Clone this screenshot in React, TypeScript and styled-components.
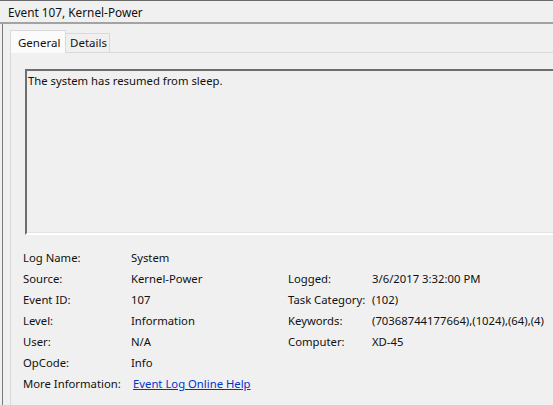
import { Fragment } from "react";
import styled, { createGlobalStyle } from "styled-components";

const GlobalStyle = createGlobalStyle`
  html, body {
    margin: 0;
    padding: 0;
    background: #f0f0f0;
  }
  body {
    font-family: "Noto Sans", "Open Sans", sans-serif;
    font-size: 11.3px;
    color: #111;
  }
`;

const Window = styled.div`
  width: 553px;
  height: 405px;
  overflow: hidden;
  background: #f0f0f0;
  display: flex;
  flex-direction: column;
`;

const TitleBar = styled.div`
  height: 21px;
  flex: none;
  border-top: 1px solid #6b6b6b;
  border-bottom: 2px solid #a3a3a3;
  padding-left: 8px;
  display: flex;
  align-items: center;
  font-size: 11.8px;
`;

const Body = styled.div`
  flex: 1;
  margin-left: 2px;
  border-left: 1px solid #7a7a7a;
  padding: 6px 0 0 7px;
  display: flex;
  flex-direction: column;
`;

const TabStrip = styled.div`
  display: flex;
  align-items: flex-end;
  height: 23px;
  position: relative;
  z-index: 1;
  margin-bottom: -1px;
`;

const Tab = styled.div<{ $active?: boolean; $width: number }>`
  box-sizing: border-box;
  width: ${(p) => p.$width}px;
  height: ${(p) => (p.$active ? "23px" : "20px")};
  padding: ${(p) => (p.$active ? "0 0 0 7px" : "0 0 1px 4px")};
  margin-left: ${(p) => (p.$active ? "0" : "-1px")};
  border: 1px solid #d9d9d9;
  border-bottom: ${(p) => (p.$active ? "none" : "1px solid #d9d9d9")};
  background: ${(p) => (p.$active ? "#fbfbfb" : "#f0f0f0")};
  display: flex;
  align-items: center;
  white-space: nowrap;
  font-size: 11.5px;
`;

const Panel = styled.div`
  flex: 1;
  border-top: 1px solid #d9d9d9;
  border-left: 1px solid #d9d9d9;
  padding: 16px 0 0 12px;
  display: flex;
  flex-direction: column;
`;

const Description = styled.div`
  box-sizing: border-box;
  height: 166px;
  margin-left: 2px;
  border-top: 2px solid #6e6e6e;
  border-left: 2px solid #6e6e6e;
  border-bottom: 2px solid #ffffff;
  box-shadow: inset 0 -1px 0 #e3e3e3;
  padding: 2px 0 0 1px;
  line-height: 16px;
`;

const Fields = styled.div`
  margin-top: 12px;
  display: grid;
  grid-template-columns: 108px 157px 84px auto;
  grid-auto-rows: 21px;
  align-items: center;
`;

const Cell = styled.div`
  white-space: nowrap;
`;

const Link = styled.a`
  color: #0033cc;
  text-decoration: underline;
  white-space: nowrap;
  margin-left: 2px;
`;

const rows: [string, string, string, string][] = [
  ["Log Name:", "System", "", ""],
  ["Source:", "Kernel-Power", "Logged:", "3/6/2017 3:32:00 PM"],
  ["Event ID:", "107", "Task Category:", "(102)"],
  ["Level:", "Information", "Keywords:", "(70368744177664),(1024),(64),(4)"],
  ["User:", "N/A", "Computer:", "XD-45"],
  ["OpCode:", "Info", "", ""],
];

export default function App() {
  return (
    <>
      <GlobalStyle />
      <Window>
        <TitleBar>Event 107, Kernel-Power</TitleBar>
        <Body>
          <TabStrip>
            <Tab $active $width={56}>General</Tab>
            <Tab $width={45}>Details</Tab>
          </TabStrip>
          <Panel>
            <Description>The system has resumed from sleep.</Description>
            <Fields>
              {rows.map((r) => (
                <Fragment key={r[0]}>
                  <Cell>{r[0]}</Cell>
                  <Cell>{r[1]}</Cell>
                  <Cell>{r[2]}</Cell>
                  <Cell>{r[3]}</Cell>
                </Fragment>
              ))}
              <Cell>More Information:</Cell>
              <Cell>
                <Link href="#">Event Log Online Help</Link>
              </Cell>
            </Fields>
          </Panel>
        </Body>
      </Window>
    </>
  );
}
